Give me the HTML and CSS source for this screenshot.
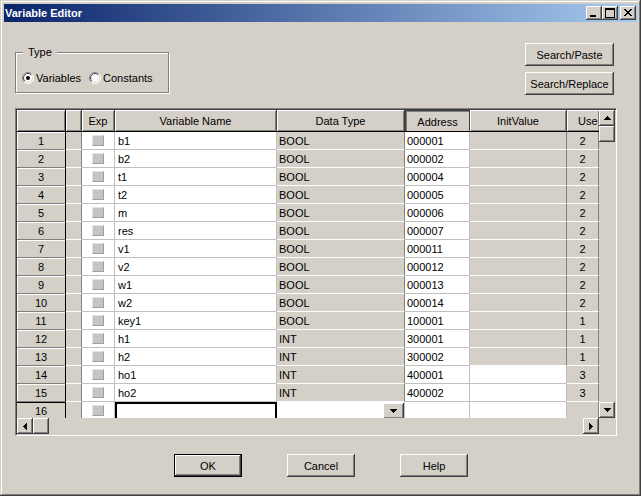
FILE: index.html
```html
<!DOCTYPE html>
<html>
<head>
<meta charset="utf-8">
<link rel="stylesheet" href="styles.css">
</head>
<body>
<div class="window">
  <div class="titlebar">
    <div class="title">Variable Editor</div>
    <div class="tbtns">
      <div class="tbtn raised"><svg width="16" height="14" shape-rendering="crispEdges"><rect x="4" y="9" width="6" height="2" fill="#000"/></svg></div>
      <div class="tbtn raised"><svg width="16" height="14" shape-rendering="crispEdges"><rect x="3" y="2" width="9" height="9" fill="none" stroke="#000" stroke-width="1" transform="translate(0.5 0.5)"/><rect x="3" y="3" width="9" height="1" fill="#000"/></svg></div>
      <div class="tbtn raised close"><svg width="16" height="14" shape-rendering="crispEdges" fill="#000"><rect x="4" y="3" width="2" height="1"/><rect x="10" y="3" width="2" height="1"/><rect x="5" y="4" width="2" height="1"/><rect x="9" y="4" width="2" height="1"/><rect x="6" y="5" width="4" height="1"/><rect x="7" y="6" width="2" height="1"/><rect x="6" y="7" width="4" height="1"/><rect x="5" y="8" width="2" height="1"/><rect x="9" y="8" width="2" height="1"/><rect x="4" y="9" width="2" height="1"/><rect x="10" y="9" width="2" height="1"/></svg></div>
    </div>
  </div>
  <div class="body">
    <div class="top">
      <fieldset class="group">
        <legend>Type</legend>
        <div class="radios">
          <label class="radio"><svg width="12" height="12"><defs><linearGradient id="o" x1="0" y1="0" x2="1" y2="1"><stop offset="0.45" stop-color="#808080"/><stop offset="0.55" stop-color="#ffffff"/></linearGradient><linearGradient id="i" x1="0" y1="0" x2="1" y2="1"><stop offset="0.45" stop-color="#404040"/><stop offset="0.55" stop-color="#d4d0c8"/></linearGradient></defs><circle cx="6" cy="6" r="5.5" fill="#fff" stroke="url(#o)"/><circle cx="6" cy="6" r="4.5" fill="#fff" stroke="url(#i)"/><circle cx="6" cy="6" r="2" fill="#000"/></svg><span>Variables</span></label>
          <label class="radio"><svg width="12" height="12"><circle cx="6" cy="6" r="5.5" fill="#fff" stroke="url(#o)"/><circle cx="6" cy="6" r="4.5" fill="#fff" stroke="url(#i)"/></svg><span>Constants</span></label>
        </div>
      </fieldset>
      <div class="search">
        <div class="btn raised">Search/Paste</div>
        <div class="btn raised">Search/Replace</div>
      </div>
    </div>

    <div class="gridframe">
      <div class="viewport">
        <div class="table">
          <div class="ch corner"></div><div class="ch"></div><div class="ch">Exp</div><div class="ch">Variable Name</div><div class="ch">Data Type</div><div class="ch pressed">Address</div><div class="ch">InitValue</div><div class="ch use">Use</div>

          <div class="rh">1</div><div class="c g"></div><div class="c ex"><i class="chk"></i></div><div class="c nm">b1</div><div class="c g dt">BOOL</div><div class="c ad">000001</div><div class="c g"></div><div class="c g us">2</div>
          <div class="rh">2</div><div class="c g"></div><div class="c ex"><i class="chk"></i></div><div class="c nm">b2</div><div class="c g dt">BOOL</div><div class="c ad">000002</div><div class="c g"></div><div class="c g us">2</div>
          <div class="rh">3</div><div class="c g"></div><div class="c ex"><i class="chk"></i></div><div class="c nm">t1</div><div class="c g dt">BOOL</div><div class="c ad">000004</div><div class="c g"></div><div class="c g us">2</div>
          <div class="rh">4</div><div class="c g"></div><div class="c ex"><i class="chk"></i></div><div class="c nm">t2</div><div class="c g dt">BOOL</div><div class="c ad">000005</div><div class="c g"></div><div class="c g us">2</div>
          <div class="rh">5</div><div class="c g"></div><div class="c ex"><i class="chk"></i></div><div class="c nm">m</div><div class="c g dt">BOOL</div><div class="c ad">000006</div><div class="c g"></div><div class="c g us">2</div>
          <div class="rh">6</div><div class="c g"></div><div class="c ex"><i class="chk"></i></div><div class="c nm">res</div><div class="c g dt">BOOL</div><div class="c ad">000007</div><div class="c g"></div><div class="c g us">2</div>
          <div class="rh">7</div><div class="c g"></div><div class="c ex"><i class="chk"></i></div><div class="c nm">v1</div><div class="c g dt">BOOL</div><div class="c ad">000011</div><div class="c g"></div><div class="c g us">2</div>
          <div class="rh">8</div><div class="c g"></div><div class="c ex"><i class="chk"></i></div><div class="c nm">v2</div><div class="c g dt">BOOL</div><div class="c ad">000012</div><div class="c g"></div><div class="c g us">2</div>
          <div class="rh">9</div><div class="c g"></div><div class="c ex"><i class="chk"></i></div><div class="c nm">w1</div><div class="c g dt">BOOL</div><div class="c ad">000013</div><div class="c g"></div><div class="c g us">2</div>
          <div class="rh">10</div><div class="c g"></div><div class="c ex"><i class="chk"></i></div><div class="c nm">w2</div><div class="c g dt">BOOL</div><div class="c ad">000014</div><div class="c g"></div><div class="c g us">2</div>
          <div class="rh">11</div><div class="c g"></div><div class="c ex"><i class="chk"></i></div><div class="c nm">key1</div><div class="c g dt">BOOL</div><div class="c ad">100001</div><div class="c g"></div><div class="c g us">1</div>
          <div class="rh">12</div><div class="c g"></div><div class="c ex"><i class="chk"></i></div><div class="c nm">h1</div><div class="c g dt">INT</div><div class="c ad">300001</div><div class="c g"></div><div class="c g us">1</div>
          <div class="rh">13</div><div class="c g"></div><div class="c ex"><i class="chk"></i></div><div class="c nm">h2</div><div class="c g dt">INT</div><div class="c ad">300002</div><div class="c g"></div><div class="c g us">1</div>
          <div class="rh">14</div><div class="c g"></div><div class="c ex"><i class="chk"></i></div><div class="c nm">ho1</div><div class="c g dt">INT</div><div class="c ad">400001</div><div class="c"></div><div class="c g us">3</div>
          <div class="rh">15</div><div class="c g"></div><div class="c ex"><i class="chk"></i></div><div class="c nm">ho2</div><div class="c g dt">INT</div><div class="c ad">400002</div><div class="c"></div><div class="c g us">3</div>
          <div class="rh cur">16</div><div class="c g"></div><div class="c ex"><i class="chk"></i></div><div class="c nm focus"></div><div class="c dd"><div class="ddbtn raised"><svg width="7" height="4" shape-rendering="crispEdges" fill="#000"><rect x="0" y="0" width="7" height="1"/><rect x="1" y="1" width="5" height="1"/><rect x="2" y="2" width="3" height="1"/><rect x="3" y="3" width="1" height="1"/></svg></div></div><div class="c ad"></div><div class="c"></div><div class="c g us"></div>
        </div>
      </div>
      <div class="vscroll">
        <div class="sbtn raised"><svg width="7" height="4" shape-rendering="crispEdges" fill="#000"><rect x="3" y="0" width="1" height="1"/><rect x="2" y="1" width="3" height="1"/><rect x="1" y="2" width="5" height="1"/><rect x="0" y="3" width="7" height="1"/></svg></div>
        <div class="sbtn raised"></div>
        <div class="track"></div>
        <div class="sbtn raised"><svg width="7" height="4" shape-rendering="crispEdges" fill="#000"><rect x="0" y="0" width="7" height="1"/><rect x="1" y="1" width="5" height="1"/><rect x="2" y="2" width="3" height="1"/><rect x="3" y="3" width="1" height="1"/></svg></div>
      </div>
      <div class="hscroll">
        <div class="sbtn raised"><svg width="4" height="7" shape-rendering="crispEdges" fill="#000"><rect x="3" y="0" width="1" height="7"/><rect x="2" y="1" width="1" height="5"/><rect x="1" y="2" width="1" height="3"/><rect x="0" y="3" width="1" height="1"/></svg></div>
        <div class="sbtn raised"></div>
        <div class="track"></div>
        <div class="sbtn raised"><svg width="4" height="7" shape-rendering="crispEdges" fill="#000"><rect x="0" y="0" width="1" height="7"/><rect x="1" y="1" width="1" height="5"/><rect x="2" y="2" width="1" height="3"/><rect x="3" y="3" width="1" height="1"/></svg></div>
      </div>
      <div class="sizebox"></div>
    </div>

    <div class="actions">
      <div class="btn raised default">OK</div>
      <div class="btn raised">Cancel</div>
      <div class="btn raised">Help</div>
    </div>
  </div>
</div>
</body>
</html>
```

FILE: styles.css
```css
* { box-sizing: border-box; }
html, body { margin: 0; padding: 0; }
body {
  background: #d4d0c8;
  font-family: "Liberation Sans", Arial, sans-serif;
  font-size: 11px;
  color: #000;
}
.window {
  width: 641px;
  height: 496px;
  padding: 4px;
  display: flex;
  flex-direction: column;
  background: #d4d0c8;
  box-shadow: inset -1px -1px #404040, inset 1px 1px #d4d0c8, inset -2px -2px #808080, inset 2px 2px #fff;
}
.raised {
  background: #d4d0c8;
  box-shadow: inset -1px -1px #404040, inset 1px 1px #fff, inset -2px -2px #808080, inset 2px 2px #d4d0c8;
}
.titlebar {
  flex: none;
  height: 18px;
  display: flex;
  align-items: center;
  padding: 0 1px 0 1px;
  background: linear-gradient(to right, #0a246a, #a6caf0);
}
.title {
  flex: 1;
  color: #fff;
  font-weight: bold;
  font-size: 11px;
  line-height: 18px;
}
.tbtns { display: flex; }
.tbtn { width: 16px; height: 14px; }
.tbtn svg { display: block; }
.tbtn.close { margin-left: 2px; }

.body {
  flex: 1;
  padding: 21px 20px 0 11px;
}
.top {
  display: flex;
  justify-content: space-between;
  align-items: flex-start;
}
.group {
  margin: 3px 0 0 0;
  width: 154px;
  padding: 12px 6px 7px 6px;
  border: 1px solid #808080;
  box-shadow: inset 1px 1px #fff, 1px 1px #fff;
  min-width: 0;
}
.group legend {
  padding: 0 5px;
  margin-left: 1px;
  line-height: 13px;
  background: #d4d0c8;
}
.radios { display: flex; height: 14px; align-items: center; }
.radio { display: flex; align-items: center; gap: 2px; margin-right: 8px; }
.radio svg { display: block; }
.search {
  display: flex;
  flex-direction: column;
  gap: 6px;
  margin-right: 3px;
}
.btn {
  display: flex;
  align-items: center;
  justify-content: center;
  height: 23px;
}
.search .btn { width: 89px; }

.gridframe {
  margin-top: 13px;
  width: 602px;
  height: 328px;
  padding: 1px;
  border: 1px solid;
  border-color: #808080 #fff #fff #808080;
  box-shadow: inset 1px 1px #404040, inset -1px -1px #d4d0c8;
  display: grid;
  grid-template-columns: 582px 16px;
  grid-template-rows: 308px 16px;
  background: #d4d0c8;
}
.viewport { overflow: hidden; background: #d4d0c8; }
.table {
  display: grid;
  grid-template-columns: 49px 16px 33px 162px 128px 65px 97px 32px;
  grid-template-rows: 22px;
  grid-auto-rows: 18px;
}
.ch {
  background: #d4d0c8;
  border-bottom: 1px solid #000;
  border-right: 1px solid #404040;
  box-shadow: inset 1px 1px #fff, inset -1px -1px #808080;
  text-align: center;
  padding-top: 2px;
  line-height: 19px;
  white-space: nowrap;
  overflow: hidden;
}
.ch.corner { border-right-color: #000; }
.ch.pressed {
  box-shadow: inset 1px 1px #404040, inset 2px 2px #808080;
  padding: 3px 0 0 1px;
}
.ch.use { text-align: left; padding-left: 11px; border-right: 0; }
.rh {
  background: #d4d0c8;
  border-right: 1px solid #000;
  border-bottom: 1px solid #808080;
  box-shadow: inset 1px 1px #fff;
  text-align: center;
  padding-top: 2px;
  line-height: 15px;
}
.rh.cur { box-shadow: inset 0 1px #000; }
.c {
  background: #fff;
  border-right: 1px solid #c0c0c0;
  border-bottom: 1px solid #c0c0c0;
  padding-top: 2px;
  line-height: 15px;
  white-space: nowrap;
  overflow: hidden;
}
.c.g {
  background: #d4d0c8;
  border-right-color: #808080;
  border-bottom-color: #fff;
}
.nm { padding-left: 3px; }
.dt { padding-left: 2px; }
.ad { padding-left: 2px; }
.us { text-align: center; }
.c.ex {
  display: flex;
  justify-content: center;
  align-items: center;
  padding-top: 0;
}
.chk {
  display: block;
  width: 12px;
  height: 11px;
  margin-left: -1px;
  background: #c4c4c4;
  border: 1px solid;
  border-color: #e4e4e4 #a0a0a0 #a0a0a0 #e4e4e4;
}
.focus {
  border-right-color: #000;
  box-shadow: inset 2px 2px #000, inset -1px 0 #000;
}
.c.dd {
  display: flex;
  justify-content: flex-end;
  align-items: flex-start;
  padding-top: 0;
  border-right-color: #c0c0c0;
}
.ddbtn {
  width: 21px;
  height: 16px;
  margin-top: 1px;
  display: flex;
  align-items: center;
  justify-content: center;
}
.vscroll { display: flex; flex-direction: column; }
.hscroll { display: flex; }
.sbtn {
  flex: none;
  width: 16px;
  height: 16px;
  display: flex;
  align-items: center;
  justify-content: center;
}
.sbtn svg { display: block; }
.track {
  flex: 1;
  background: #d4d0c8;
}
.sizebox { background: #d4d0c8; }

.actions {
  margin-top: 18px;
  display: flex;
  justify-content: center;
  gap: 45px;
  padding-left: 10px;
}
.actions .btn { width: 68px; }
.btn.default {
  border: 1px solid #000;
}
```
